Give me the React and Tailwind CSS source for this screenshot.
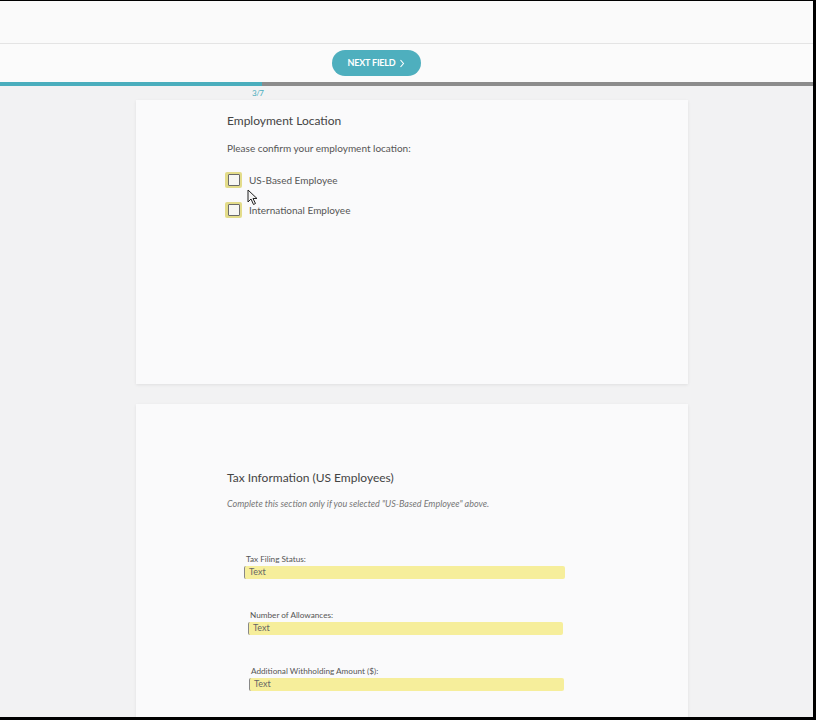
import React from "react";

const font = { fontFamily: "Lato, 'Open Sans', 'Liberation Sans', sans-serif" };

function Check({ label }) {
  return (
    <div className="flex items-center gap-[7px] h-[16px]">
      <div className="w-[17px] h-[16px] rounded-[2px] bg-[#e3dc8a] p-[2px] pl-[3px]">
        <div className="w-full h-full border-[1.5px] border-[#6b6b6b] bg-[#f7f7f4] rounded-[1px]" />
      </div>
      <span className="text-[10px] text-[#555]">{label}</span>
    </div>
  );
}

function Field({ label, indent, width }) {
  return (
    <div className={indent}>
      <div className="text-[8.2px] text-[#555] leading-[10px] pl-[2px]">{label}</div>
      <div className={`mt-[2px] h-[13px] ${width} bg-[#f6ee9b] rounded-[2px] border-l border-[#888] flex items-center pl-[4px]`}>
        <span className="text-[9px] text-[#666]">Text</span>
      </div>
    </div>
  );
}

export default function App() {
  return (
    <div className="w-[816px] h-[720px] bg-black pt-[1px] pr-[3px] pb-[3px]" style={font}>
      <div className="relative w-full h-full bg-[#f2f2f3] flex flex-col overflow-hidden">
        {/* top bar */}
        <div className="shrink-0 h-[43px] bg-[#fafafa] border-b border-[#e4e4e4]" />
        {/* toolbar */}
        <div className="shrink-0 h-[38px] bg-[#fbfbfb] flex items-center pl-[332px]">
          <button className="w-[89px] h-[26px] rounded-full bg-[#4eafbe] text-white text-[9px] font-bold flex items-center justify-center gap-[4px] tracking-[-0.2px]">
            NEXT FIELD
            <svg width="6" height="9" viewBox="0 0 6 9" fill="none">
              <path d="M1.5 1 L4.5 4.5 L1.5 8" stroke="white" strokeWidth="1.1" />
            </svg>
          </button>
        </div>
        {/* progress */}
        <div className="shrink-0 h-[4px] flex">
          <div className="w-[262px] bg-[#4aaebd]" />
          <div className="flex-1 bg-[#8c8c8c]" />
        </div>
        <div className="shrink-0 h-[14px] pl-[252px] pt-[3px] text-[8px] leading-[8px] text-[#4aaebd] tracking-[-0.5px]">
          3/7
        </div>
        {/* form pages */}
        <div className="shrink-0 flex flex-col gap-[20px] pl-[136px]">
          <div className="w-[552px] h-[284px] bg-[#fafafb] shadow-[0_1px_3px_rgba(0,0,0,0.08)] pl-[91px] pt-[12px]">
            <div className="text-[12px] text-[#444]">Employment Location</div>
            <div className="mt-[11px] text-[10px] text-[#555]">Please confirm your employment location:</div>
            <div className="mt-[16px] flex flex-col gap-[14px] ml-[-2px]">
              <Check label="US-Based Employee" />
              <Check label="International Employee" />
            </div>
          </div>
          <div className="w-[552px] h-[320px] bg-[#fafafb] shadow-[0_1px_3px_rgba(0,0,0,0.08)] pl-[91px] pt-[65px]">
            <div className="text-[12px] text-[#444]">Tax Information (US Employees)</div>
            <div className="mt-[10px] text-[9px] italic text-[#777]">
              Complete this section only if you selected "US-Based Employee" above.
            </div>
            <div className="mt-[43px] flex flex-col gap-[31px]">
              <Field label="Tax Filing Status:" indent="ml-[17px]" width="w-[321px]" />
              <Field label="Number of Allowances:" indent="ml-[21px]" width="w-[315px]" />
              <Field label="Additional Withholding Amount ($):" indent="ml-[22px]" width="w-[315px]" />
            </div>
          </div>
        </div>
        {/* pointer */}
        <svg className="absolute left-[247px] top-[188px]" width="11" height="17" viewBox="0 0 11 17">
          <path d="M1 1 L1 13 L4 10 L6.5 15.5 L8.5 14.5 L6 9.5 L10 9.5 Z" fill="#f4f4f4" stroke="#222" strokeWidth="1" strokeLinejoin="round" />
        </svg>
      </div>
    </div>
  );
}
